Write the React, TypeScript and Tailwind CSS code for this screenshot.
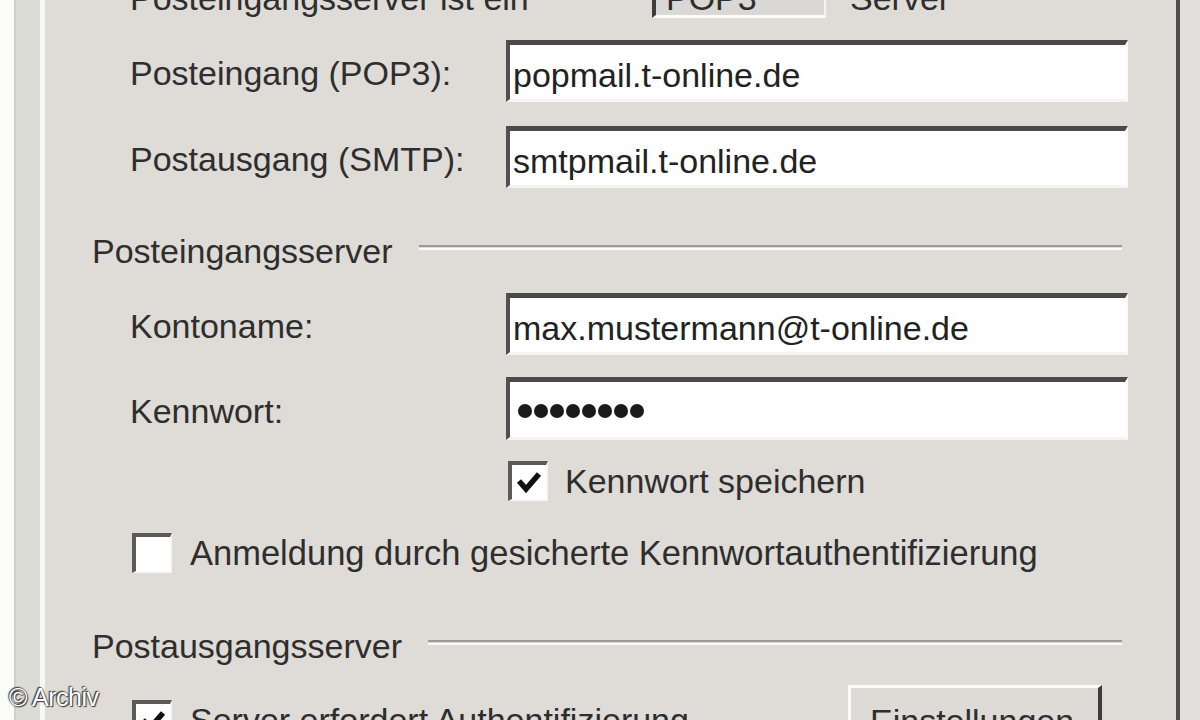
import React from "react";

const font = "font-['Liberation_Sans',Arial,sans-serif]";

function Sunken({ children, className = "" }: { children?: React.ReactNode; className?: string }) {
  return (
    <div
      className={`flex items-center border-t-[5px] border-l-[4px] border-r-[3px] border-b-[3px] border-t-[#4a4a48] border-l-[#505050] border-r-[#fbfbfb] border-b-[#f4f4f2] bg-white ${className}`}
    >
      {children}
    </div>
  );
}

function Checkbox({ checked }: { checked?: boolean }) {
  return (
    <div className="flex h-[40px] w-[40px] shrink-0 items-center justify-center border-t-[4px] border-l-[4px] border-r-[2px] border-b-[2px] border-t-[#5a5a58] border-l-[#5a5a58] border-r-[#f6f6f4] border-b-[#f6f6f4] bg-white">
      {checked && (
        <svg width="28" height="26" viewBox="0 0 28 26">
          <path d="M4 12 L11 20 L24 5" fill="none" stroke="#111" strokeWidth="5.5" strokeLinejoin="miter" />
        </svg>
      )}
    </div>
  );
}

function FieldRow({ label, children, h = "h-[62px]", mt }: { label: string; children: React.ReactNode; h?: string; mt: string }) {
  return (
    <div className={`flex shrink-0 ${h} ${mt} items-center pl-[85px]`}>
      <div className="w-[376px] shrink-0 pt-[4px] text-[34px] leading-[40px] text-[#2e2e2e]">{label}</div>
      <Sunken className="h-full w-[622px] pl-[3px] pt-[6px]">{children}</Sunken>
    </div>
  );
}

function Heading({ text, mt }: { text: string; mt: string }) {
  return (
    <div className={`flex h-[40px] shrink-0 ${mt} items-start pl-[47px] pr-[54px]`}>
      <div className="text-[34px] leading-[40px] text-[#2e2e2e]">{text}</div>
      <div className="ml-[26px] mt-[14px] h-[5px] flex-1 border-t-[2px] border-b-[2px] border-t-[#9c9a96] border-b-[#fbfbf9]" />
    </div>
  );
}

export default function App() {
  return (
    <div className={`relative flex h-[720px] w-[1200px] overflow-hidden ${font}`}>
      <div className="w-[14px] bg-[#fbfbf8]" />
      <div className="w-[2px] bg-[#cfcfca]" />
      <div className="w-[24px] bg-[#dcdcd7]" />
      <div className="w-[5px] bg-[#f7f7f3]" />
      <div className="flex flex-1 flex-col bg-[#dfdbd7]">
        {/* top row, mostly cut off */}
        <div className="mt-[-22px] flex h-[40px] shrink-0 items-start pl-[85px]">
          <div className="w-[522px] shrink-0 text-[34px] leading-[40px] text-[#2e2e2e]">Posteingangsserver ist ein</div>
          <div className="h-full w-[174px] border-l-[4px] border-b-[3px] border-r-[2px] border-l-[#3e3e3e] border-b-[#fbfbf9] border-r-[#f4f4f2] bg-[#dad8d4] pl-[10px] text-[34px] leading-[40px] text-[#2e2e2e]">
            POP3
          </div>
          <div className="ml-[24px] text-[34px] leading-[40px] text-[#2e2e2e]">Server</div>
        </div>

        <FieldRow label="Posteingang (POP3):" mt="mt-[22px]">
          <span className="text-[34px] leading-[40px] text-[#222]">popmail.t-online.de</span>
        </FieldRow>
        <FieldRow label="Postausgang (SMTP):" mt="mt-[24px]">
          <span className="text-[34px] leading-[40px] text-[#222]">smtpmail.t-online.de</span>
        </FieldRow>

        <Heading text="Posteingangsserver" mt="mt-[43px]" />

        <FieldRow label="Kontoname:" mt="mt-[22px]">
          <span className="text-[34px] leading-[40px] text-[#222]">max.mustermann@t-online.de</span>
        </FieldRow>
        <FieldRow label="Kennwort:" mt="mt-[22px]" h="h-[63px]">
          <div className="flex gap-[2px] pl-[5px] pb-[4px]">
            {Array.from({ length: 8 }).map((_, i) => (
              <div key={i} className="h-[14px] w-[14px] rounded-full bg-[#1a1a1a]" />
            ))}
          </div>
        </FieldRow>

        <div className="mt-[20px] flex h-[42px] shrink-0 items-center pl-[463px]">
          <Checkbox checked />
          <span className="ml-[17px] text-[34px] leading-[40px] text-[#2e2e2e]">Kennwort speichern</span>
        </div>

        <div className="mt-[30px] flex h-[42px] shrink-0 items-center pl-[87px]">
          <Checkbox />
          <span className="ml-[18px] text-[34.5px] leading-[40px] text-[#2e2e2e]">
            Anmeldung durch gesicherte Kennwortauthentifizierung
          </span>
        </div>

        <Heading text="Postausgangsserver" mt="mt-[52px]" />

        <div className="mt-[19px] flex h-[62px] shrink-0 items-start pl-[87px]">
          <div className="mt-[15px]">
            <Checkbox checked />
          </div>
          <span className="ml-[18px] mt-[15px] w-[658px] shrink-0 text-[34px] leading-[40px] text-[#2e2e2e]">
            Server erfordert Authentifizierung
          </span>
          <div className="h-[70px] w-[254px] shrink-0 border-t-[3px] border-l-[3px] border-r-[4px] border-t-[#fbfbf9] border-l-[#fbfbf9] border-r-[#3c3c3c] bg-[#dedad6] pl-[19px] pt-[13px] text-[34px] leading-[40px] text-[#2e2e2e]">
            Einstellungen...
          </div>
        </div>
      </div>
      <div className="w-[4px] bg-[#4d4d4d]" />
      <div className="w-[20px] bg-[#e3dfdf]" />

      <div className="absolute left-[9px] top-[681px] text-[25px] leading-[32px] tracking-[-0.5px] text-white [text-shadow:0_0_2px_#3a3a3a,1px_1px_1px_#3a3a3a,-1px_-1px_1px_#3a3a3a]">
        © Archiv
      </div>
    </div>
  );
}
